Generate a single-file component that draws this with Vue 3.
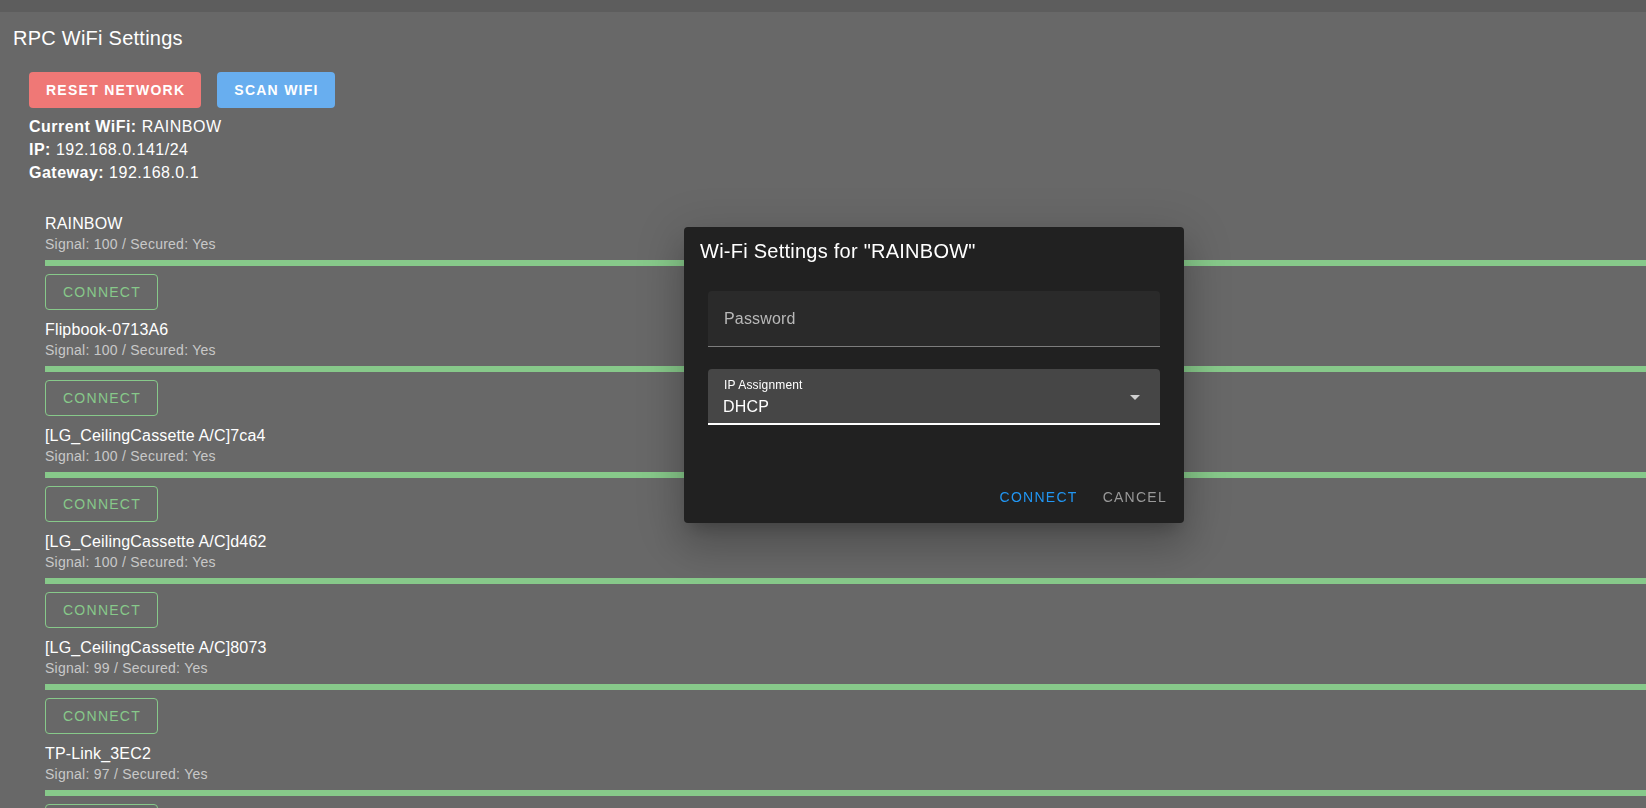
<script setup>
import { ref } from 'vue'

const networks = [
  { name: 'RAINBOW', signal: 100 },
  { name: 'Flipbook-0713A6', signal: 100 },
  { name: '[LG_CeilingCassette A/C]7ca4', signal: 100 },
  { name: '[LG_CeilingCassette A/C]d462', signal: 100 },
  { name: '[LG_CeilingCassette A/C]8073', signal: 99 },
  { name: 'TP-Link_3EC2', signal: 97 },
]
const password = ref('')
const assignment = ref('DHCP')
</script>

<template>
  <div class="page">
    <header class="topbar"></header>
    <main class="content">
      <h1 class="title">RPC WiFi Settings</h1>
      <section class="panel">
        <div class="toolbar">
          <button type="button" class="btn red">Reset Network</button>
          <button type="button" class="btn blue">Scan WiFi</button>
        </div>
        <div class="status">
          <div><b>Current WiFi:</b> RAINBOW</div>
          <div><b>IP:</b> 192.168.0.141/24</div>
          <div><b>Gateway:</b> 192.168.0.1</div>
        </div>
        <ul class="networks">
          <li v-for="n in networks" :key="n.name">
            <div class="name">{{ n.name }}</div>
            <div class="meta">Signal: {{ n.signal }} / Secured: Yes</div>
            <div class="bar"></div>
            <button type="button" class="btn outlined">Connect</button>
          </li>
        </ul>
      </section>
    </main>

    <div class="overlay">
      <form class="dialog" role="dialog" aria-labelledby="dialog-title" @submit.prevent>
        <h2 id="dialog-title" class="dialog-title">Wi-Fi Settings for "RAINBOW"</h2>
        <div class="fields">
          <div class="field">
            <label v-show="!password" class="inner-label" for="password">Password</label>
            <input id="password" v-model="password" type="password" autocomplete="off" />
          </div>
          <div class="field active">
            <label class="float-label" for="assignment">IP Assignment</label>
            <select id="assignment" v-model="assignment">
              <option>DHCP</option>
              <option>Static</option>
            </select>
            <svg class="caret" viewBox="0 0 24 24" aria-hidden="true"><path d="M7,10L12,15L17,10H7Z" /></svg>
          </div>
        </div>
        <div class="actions">
          <button type="submit" class="btn text primary">Connect</button>
          <button type="button" class="btn text muted">Cancel</button>
        </div>
      </form>
    </div>
  </div>
</template>

<style>
body {
  background: #686868;
}
</style>

<style scoped>
.page {
  height: 100vh;
  overflow: hidden;
  background: #686868;
  color: #fff;
  font-family: "Liberation Sans", Arial, sans-serif;
  font-size: 16px;
  letter-spacing: 0.01em;
}
.page * {
  box-sizing: border-box;
}
.topbar {
  height: 12px;
  background: #5d5d5d;
}
.title,
.dialog-title {
  margin: 0;
  font-size: 20px;
  line-height: 32px;
  font-weight: 400;
  letter-spacing: 0.0125em;
}
.title {
  padding: 10px 13px;
}
.panel {
  padding: 8px 0 0 29px;
}
.toolbar {
  display: flex;
  gap: 16px;
}
.btn {
  height: 36px;
  padding: 0 16px 0 17px;
  border: 0;
  border-radius: 4px;
  background: transparent;
  color: #fff;
  font-family: inherit;
  font-size: 14px;
  letter-spacing: 0.09em;
  text-transform: uppercase;
  cursor: pointer;
}
.toolbar .btn {
  font-weight: 700;
}
.red {
  background: #ef7876;
}
.blue {
  background: #68aeef;
}
.status {
  padding-top: 7px;
  line-height: 23px;
  letter-spacing: 0.03125em;
}
.networks {
  margin: 0;
  padding: 28px 0 0 16px;
  list-style: none;
  display: flex;
  flex-direction: column;
  gap: 8px;
}
.name {
  line-height: 24px;
  letter-spacing: 0.01em;
}
.meta {
  font-size: 14px;
  line-height: 16px;
  letter-spacing: 0.018em;
  color: #c8c8c8;
}
.bar {
  height: 6px;
  margin: 8px 0;
  background: #87c98a;
}
.outlined {
  display: block;
  border: 1px solid #87c98a;
  color: #87c98a;
}
.overlay {
  position: fixed;
  inset: 0;
  display: flex;
  align-items: center;
  justify-content: center;
  padding: 0 0 58px 222px;
}
.dialog {
  width: 500px;
  max-width: 100%;
  border-radius: 4px;
  background: #212121;
  box-shadow: 0 11px 15px -7px rgba(0, 0, 0, 0.2), 0 24px 38px 3px rgba(0, 0, 0, 0.14),
    0 9px 46px 8px rgba(0, 0, 0, 0.12);
}
.dialog-title {
  padding: 8px 16px;
}
.fields {
  padding: 16px 24px 46px;
  display: flex;
  flex-direction: column;
  gap: 22px;
}
.field {
  position: relative;
  height: 56px;
  border-radius: 4px 4px 0 0;
  border-bottom: 1px solid #7d7d7d;
  background: #2a2a2a;
}
.field.active {
  background: #464646;
  border-bottom: 2px solid #fff;
}
.field input,
.field select {
  display: block;
  width: 100%;
  height: 100%;
  padding: 0 16px;
  border: 0;
  outline: 0;
  background: transparent;
  color: #fff;
  font-family: inherit;
  font-size: 16px;
  letter-spacing: 0.01em;
  appearance: none;
}
.field select {
  padding: 20px 40px 0 15px;
}
.field option {
  background: #212121;
}
.inner-label {
  position: absolute;
  left: 16px;
  top: 16px;
  line-height: 24px;
  color: #b8b8b8;
  pointer-events: none;
}
.float-label {
  position: absolute;
  left: 16px;
  top: 8px;
  font-size: 12px;
  line-height: 16px;
  pointer-events: none;
}
.caret {
  position: absolute;
  right: 13px;
  top: 16px;
  width: 24px;
  height: 24px;
  fill: #cfcfcf;
  pointer-events: none;
}
.actions {
  display: flex;
  justify-content: flex-end;
  gap: 8px;
  padding: 8px;
}
.text {
  padding: 0 9px 0 8px;
}
.primary {
  color: #2196f3;
}
.muted {
  color: #999;
}
</style>
